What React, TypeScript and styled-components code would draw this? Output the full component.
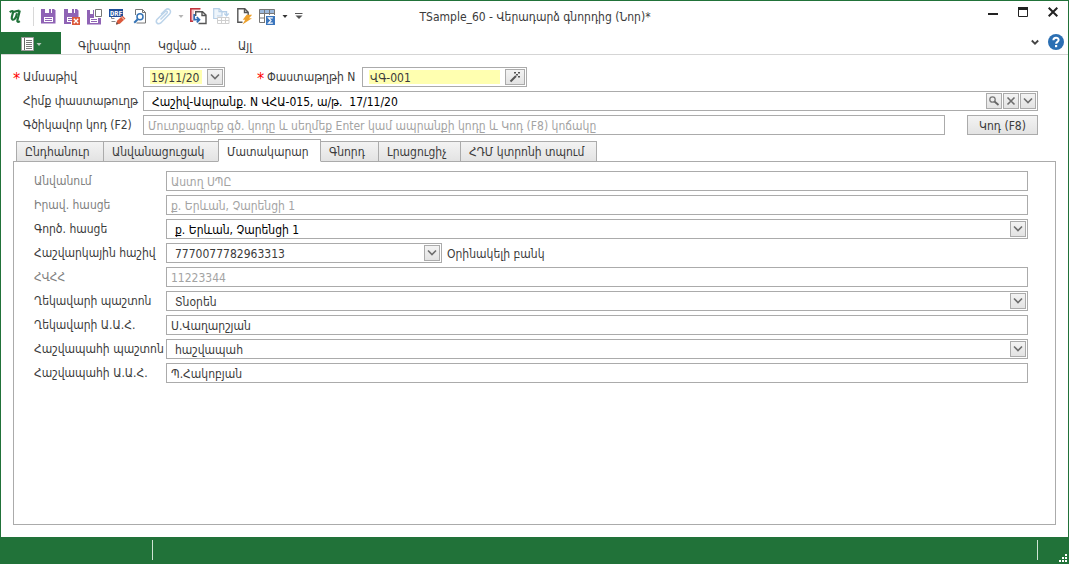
import React, { useState } from "react";
import styled, { createGlobalStyle, css } from "styled-components";

const green = "#217239";
const line = "#ababab";
const ink = "#3b3b3b";

const GlobalStyle = createGlobalStyle`
  *, *::before, *::after { box-sizing: border-box; }
  html, body, #root { height: 100%; }
  body { margin: 0; background: #fff; }
  body, button, input, select {
    font-family: "DejaVu Sans Condensed", "DejaVu Sans", "Noto Sans", sans-serif;
    font-size: 12px;
    line-height: 16px;
    color: ${ink};
  }
  button, input, select { margin: 0; padding: 0; border: 0; background: none; border-radius: 0; outline: none; }
  svg { display: block; flex: none; }
`;

const Window = styled.div`
  display: flex;
  flex-direction: column;
  min-height: 100%;
  border: 1px solid ${green};
  border-bottom: 0;
`;

const TitleBar = styled.header`
  display: grid;
  grid-template-columns: 1fr auto 1fr;
  align-items: center;
  height: 31px;
  padding: 0 7px 0 8px;
`;

const QuickAccess = styled.div`
  display: flex;
  align-items: center;
`;

const Separator = styled.span`
  width: 1px;
  height: 19px;
  margin: 0 3px 0 9px;
  background: #d8d8d8;
`;

const ToolButton = styled.button<{ $width?: number }>`
  display: flex;
  align-items: center;
  justify-content: center;
  width: ${(p) => p.$width ?? 23}px;
  height: 22px;
`;

const Title = styled.h1`
  margin: 0;
  font-size: 12px;
  font-weight: 400;
  white-space: pre;
`;

const WindowButtons = styled.div`
  display: flex;
  align-self: start;
  justify-content: flex-end;
  gap: 14px;
`;

const WindowButton = styled.button`
  display: flex;
  align-items: center;
  justify-content: center;
  width: 16px;
  height: 22px;
`;

const Ribbon = styled.nav`
  display: flex;
  align-items: stretch;
  height: 23px;
  border-bottom: 1px solid #d5d5d5;
`;

const AppMenu = styled.button`
  display: flex;
  align-items: center;
  gap: 1px;
  width: 60px;
  padding: 3px 0 0 20px;
  background: ${green};
`;

const RibbonTab = styled.button`
  padding: 5px 0 0;
  margin-left: 17px;
  width: 53px;
  white-space: nowrap;
  text-align: left;
  & + & { margin-left: 27px; }
`;

const RibbonEnd = styled.div`
  display: flex;
  align-items: center;
  gap: 3px;
  margin-left: auto;
  padding: 0 3px 2px 0;
`;

const IconButton = styled.button`
  display: flex;
  align-items: center;
  justify-content: center;
  width: 18px;
  height: 18px;
`;

const Form = styled.form`
  display: flex;
  flex: 1;
  flex-direction: column;
  padding: 12px;
`;

const Header = styled.div`
  display: flex;
  flex-direction: column;
  gap: 4px;
  padding-right: 18px;
  margin-bottom: 4px;
`;

const Row = styled.div`
  display: flex;
  align-items: center;
  height: 20px;
`;

const Label = styled.label<{ $required?: boolean; $muted?: boolean; $width?: number }>`
  flex: none;
  width: ${(p) => p.$width ?? 130}px;
  padding-left: 10px;
  white-space: nowrap;
  color: ${(p) => (p.$muted ? "#808080" : ink)};
  ${(p) =>
    p.$required &&
    css`
      padding-left: 0;
      &::before {
        content: "*";
        display: inline-block;
        width: 10px;
        font-size: 16px;
        line-height: 12px;
        vertical-align: -3px;
        color: #f00;
      }
    `}
`;

const SecondLabel = styled(Label)`
  margin-left: 32px;
`;

const Field = styled.div<{ $width?: number }>`
  display: flex;
  align-items: center;
  flex: ${(p) => (p.$width ? `0 0 ${p.$width}px` : "1 1 0")};
  min-width: 0;
  height: 20px;
  border: 1px solid ${line};
  background: #fff;
`;

const textColor = css<{ $tone?: "black" | "muted" }>`
  color: ${(p) => (p.$tone === "black" ? "#000" : p.$tone === "muted" ? "#a3a3a3" : ink)};
`;

const TextInput = styled.input<{ $tone?: "black" | "muted"; $inset?: boolean }>`
  flex: 1;
  min-width: 0;
  height: 18px;
  padding: 2px 4px 0;
  padding-left: ${(p) => (p.$inset ? 8 : 4)}px;
  ${textColor}
  &::placeholder { color: #a3a3a3; opacity: 1; }
`;

const RequiredInput = styled.input`
  flex: 1;
  min-width: 0;
  height: 14px;
  margin: 0 5px 0 6px;
  padding: 1px 1px 0;
  background: #ffffb0;
`;

const Combo = styled(Field)`
  position: relative;
`;

const Select = styled.select<{ $tone?: "black" | "muted" }>`
  flex: 1;
  min-width: 0;
  height: 18px;
  padding: 2px 20px 0 8px;
  appearance: none;
  ${textColor}
`;

const buttonFace = css`
  display: flex;
  align-items: center;
  justify-content: center;
  border: 1px solid ${line};
  background: linear-gradient(#f3f3f3, #e3e3e3);
`;

const FieldButton = styled.button<{ $wide?: boolean }>`
  ${buttonFace}
  flex: none;
  width: ${(p) => (p.$wide ? 20 : 16)}px;
  height: 16px;
  margin-right: 1px;
`;

const ComboArrow = styled.span`
  ${buttonFace}
  position: absolute;
  top: 1px;
  right: 1px;
  width: 16px;
  height: 16px;
  pointer-events: none;
`;

const CodeButton = styled.button`
  ${buttonFace}
  flex: none;
  width: 71px;
  height: 20px;
  margin-left: 22px;
  padding-top: 1px;
`;

const Tabs = styled.div`
  display: flex;
  align-items: flex-end;
  height: 23px;
  margin-bottom: -1px;
  padding-left: 3px;
`;

const Tab = styled.button<{ $active?: boolean; $width: number }>`
  width: ${(p) => p.$width}px;
  height: 21px;
  padding: 0 0 0 8px;
  border: 1px solid ${line};
  background: linear-gradient(#f3f3f3, #e3e3e3);
  text-align: left;
  white-space: nowrap;
  & + & { margin-left: -1px; }
  ${(p) =>
    p.$active &&
    css`
      z-index: 1;
      height: 23px;
      padding-top: 2px;
      border-bottom-color: #fff;
      background: #fff;
    `}
`;

const Panel = styled.section`
  display: flex;
  flex: 1;
  flex-direction: column;
  gap: 4px;
  padding: 9px 27px 9px 10px;
  border: 1px solid ${line};
`;

const Note = styled.span`
  margin-left: 5px;
  padding-top: 2px;
`;

const StatusBar = styled.footer`
  display: flex;
  align-items: stretch;
  height: 27px;
  padding: 3px 0 0;
  background: ${green};
`;

const StatusCell = styled.div<{ $width?: number }>`
  flex: ${(p) => (p.$width ? `0 0 ${p.$width}px` : 1)};
  height: 20px;
  border-right: 1px solid #cfe3d4;
`;

const Grip = styled.div`
  display: flex;
  flex: 0 0 30px;
  align-items: flex-end;
  justify-content: flex-end;
  padding: 0 1px 2px 0;
`;

const Chevron = () => (
  <svg width="10" height="8" viewBox="0 0 10 8">
    <path d="M1 1.5 5 5.500 9 1.500" fill="none" stroke="#6e6e6e" strokeWidth="1.600" />
  </svg>
);

const Triangle = ({ color }: { color: string }) => (
  <svg width="6" height="4" viewBox="0 0 6 4">
    <path d="M.5 0h5L3 3z" fill={color} />
  </svg>
);

const Logo = () => (
  <svg width="15" height="16" viewBox="0 0 15 16">
    <path
      d="M.8 3.200C2.400 1.600 4.400 1.500 4 3.600L2.800 8.200C2.300 10.800 4 11.300 5.600 10 7 8.800 7.600 6.500 8 4.200"
      fill="none" stroke={green} strokeWidth="2.200"
    />
    <path d="M4.800 3.300C6.600 1.400 8 2.600 10.600 1.600M10.800 1.600 8.400 11.200c-.4 1.800.6 2.300 2.400 1" fill="none" stroke={green} strokeWidth="2.200" />
  </svg>
);

const purple = "#8f63b5";

const SaveIcon = () => (
  <svg width="15" height="15" viewBox="0 0 15 15">
    <path d="M0 0h13l1.500 1.500V14.500H0z" fill={purple} />
    <path d="M4 0h4v4H4zM10 0h1v4h-1z" fill="#fff" />
    <path d="M3 8h9v5H3z" fill="#fff" />
    <path d="M4 9.500h7M4 11.500h7" stroke={purple} />
  </svg>
);

const SaveCloseIcon = () => (
  <svg width="16" height="16" viewBox="0 0 16 16">
    <path d="M0 0h13l1.500 1.500V8H7v7H0z" fill={purple} />
    <path d="M4 0h4v4H4zM10 0h1v4h-1zM3 8h5v5H3z" fill="#fff" />
    <path d="M4 9.500h4M4 11.500h4" stroke={purple} />
    <path d="M8 8h8v8H8z" fill="#dc5a3c" />
    <path d="m9.800 9.800 4.400 4.400m0-4.400-4.400 4.400" stroke="#fff" strokeWidth="1.300" />
  </svg>
);

const SaveNewIcon = () => (
  <svg width="16" height="16" viewBox="0 0 16 16">
    <path d="M0 1h7v8h7v6.500H0z" fill={purple} />
    <path d="M3 1h3v4H3zM3 9h8v5H3z" fill="#fff" />
    <path d="M4 10.500h6M4 12.500h6" stroke={purple} />
    <path d="M7.500 0h8v9h-8z" fill="#fff" />
    <path d="M8.500.5h6v7h-6z" fill="#fff" stroke="#777" />
  </svg>
);

const DrfText = styled.text`
  font-family: "DejaVu Sans Mono", monospace;
  font-size: 7px;
  font-weight: 700;
  fill: #fff;
`;

const DrfIcon = () => (
  <svg width="17" height="16" viewBox="0 0 17 16">
    <path d="M2.500 8v1.500h3M2.500 12.500h4" fill="none" stroke="#888" />
    <path d="M0 0h14v8H0z" fill="#1f4e99" />
    <DrfText x="1" y="7">DRF</DrfText>
    <path d="m7 15.500 1-3.800 5.500-5 3 2.800-5.600 5.200z" fill="#dc5a3c" />
    <path d="m7 15.500.6-2.400 1.800 1.800z" fill="#555" />
    <path d="m12.300 7.800 2.800 2.700" stroke="#fff" strokeWidth=".8" />
  </svg>
);

const PreviewIcon = () => (
  <svg width="15" height="15" viewBox="0 0 15 15">
    <path d="M2.500 6V.5h7l3 3V14h-9M9.500.5v3h3" fill="none" stroke="#777" />
    <circle cx="7" cy="7.800" r="3" fill="#fff" stroke="#3573b5" strokeWidth="1.500" />
    <path d="m4.700 10.200-3.500 3.600" stroke="#3573b5" strokeWidth="2" />
  </svg>
);

const ClipIcon = () => (
  <svg width="17" height="17" viewBox="0 0 17 17">
    <path
      d="m5.500 11.500 6.500-6.500c.9-1.500-.6-2.500-1.900-1.400L2 11.500c-2 2.800 1 5.600 3.800 3.400L14.500 6c2.600-3.200-.8-6.600-4-4.200L6 6.300"
      fill="none" stroke="#bcd4ea" strokeWidth="1.500"
    />
  </svg>
);

const CopyInIcon = () => (
  <svg width="17" height="17" viewBox="0 0 17 17">
    <path d="M0 .5h10v2H4v11H0z" fill="#f4c9cc" />
    <path d="M10.500.8H.8v12.500H3" fill="none" stroke="#c0333c" strokeWidth="1.500" />
    <path d="M5.700 8V3.700h6.800L16 7v8.500H8.500M12 3.700V7.500h4" fill="#fff" stroke="#555" strokeWidth="1.400" />
    <path d="M4.200 6v5.700h5M6.800 9l2.700 2.700-2.700 2.700" fill="none" stroke="#2f6eb5" strokeWidth="1.700" />
  </svg>
);

const CopyTableIcon = () => (
  <svg width="17" height="17" viewBox="0 0 17 17">
    <path d="M4 10.500H.7V.7h5.500L9 3.500V8H4M6 .7v3h3" fill="#eef5fb" stroke="#b7d0e8" strokeWidth="1.200" />
    <path d="M9 3.700h4.500v4M11.300 5.600l2.200 2.200 2.200-2.200" fill="none" stroke="#b5cfe8" strokeWidth="1.400" />
    <path d="M4.500 9.500h11.500v6H4.500zM4.500 12.500H16M8.500 9.500v6M12.500 9.500v6" fill="#fff" stroke="#cfcfcf" />
  </svg>
);

const FlashIcon = () => (
  <svg width="16" height="17" viewBox="0 0 16 17">
    <path d="M5.500 14.300H.8V.8h7l3.400 3.400v3M7.500.8v3.700h3.700" fill="none" stroke="#555" strokeWidth="1.400" />
    <path d="M9.600 6.700h5.600l-3.200 3.600h3L5.500 16.500l2.700-4.700H5.800z" fill="#eda12c" />
  </svg>
);

const TableSumIcon = () => (
  <svg width="17" height="16" viewBox="0 0 17 16">
    <path d="M.5.5h15v4H.5z" fill="#9cb9dc" />
    <path d="M.5.5h15v13H.5zM.5 4.500h15M.5 9h15M5.500.5v13M10.500.5v13" fill="none" stroke="#777" />
    <path d="M6 6h11v10H6z" fill="#fff" />
    <path d="M7 7h9v9H7z" fill="#3c76bd" />
    <path d="M13.800 8.800H9.500l2.500 2.700-2.500 2.700h4.300" fill="none" stroke="#fff" strokeWidth="1.200" />
  </svg>
);

const CustomizeIcon = () => (
  <svg width="8" height="7" viewBox="0 0 8 7">
    <path d="M0 .5h7.500" stroke="#555" />
    <path d="M.5 2.500h7L4 6z" fill="#555" />
  </svg>
);

const ListIcon = () => (
  <svg width="14" height="15" viewBox="0 0 14 15">
    <path d="M.5.5h12v13H.5z" fill="#fff" stroke="#9a9a9a" />
    <path d="M3.500 1v12" stroke="#666" />
    <path d="M5 3.500h6M5 5.500h6M5 7.500h6M5 9.500h6M5 11.500h6" stroke="#777" />
  </svg>
);

const WandIcon = () => (
  <svg width="12" height="12" viewBox="0 0 12 12">
    <path d="m1.500 10.500 5.500-5.500" stroke="#555" strokeWidth="2" />
    <path d="M5 1h2v1.500H5zM9 1h2v1.500H9zM7 3h2v1.500H7zM9 5h2v1.500H9z" fill="#555" />
  </svg>
);

const SearchIcon = () => (
  <svg width="12" height="12" viewBox="0 0 12 12">
    <circle cx="4.500" cy="4.500" r="2.700" fill="none" stroke="#777" strokeWidth="1.300" />
    <path d="m6.500 6.500 4 3.500" stroke="#666" strokeWidth="1.800" />
  </svg>
);

const ClearIcon = () => (
  <svg width="10" height="10" viewBox="0 0 10 10">
    <path d="m1.500 1.500 7 7m0-7-7 7" stroke="#6e6e6e" strokeWidth="1.600" />
  </svg>
);

const GripIcon = () => (
  <svg width="8" height="8" viewBox="0 0 8 8">
    <path d="M6 0h2v2H6zM3 3h2v2H3zM6 3h2v2H6zM0 6h2v2H0zM3 6h2v2H3zM6 6h2v2H6z" fill="#fff" />
  </svg>
);

type Detail = {
  id: string;
  label: string;
  value: string;
  kind: "text" | "combo";
  tone?: "black" | "muted";
  width?: number;
  note?: string;
};

const details: Detail[] = [
  { id: "name", label: "Անվանում", value: "Աստղ ՍՊԸ", kind: "text", tone: "muted" },
  { id: "legal", label: "Իրավ. հասցե", value: "ք. Երևան, Չարենցի 1", kind: "text", tone: "muted" },
  { id: "address", label: "Գործ. հասցե", value: "ք. Երևան, Չարենցի 1", kind: "combo", tone: "black" },
  { id: "account", label: "Հաշվարկային հաշիվ", value: "7770077782963313", kind: "combo", width: 276, note: "Օրինակելի բանկ" },
  { id: "tax", label: "ՀՎՀՀ", value: "11223344", kind: "text", tone: "muted" },
  { id: "headPost", label: "Ղեկավարի պաշտոն", value: "Տնօրեն", kind: "combo" },
  { id: "headName", label: "Ղեկավարի Ա.Ա.Հ.", value: "Ս.Վաղարշյան", kind: "text" },
  { id: "accPost", label: "Հաշվապահի պաշտոն", value: "հաշվապահ", kind: "combo" },
  { id: "accName", label: "Հաշվապահի Ա.Ա.Հ.", value: "Պ.Հակոբյան", kind: "text" },
];

const tabs = [
  { title: "Ընդհանուր", width: 88 },
  { title: "Անվանացուցակ", width: 116 },
  { title: "Մատակարար", width: 103 },
  { title: "Գնորդ", width: 59 },
  { title: "Լրացուցիչ", width: 83 },
  { title: "ՀԴՄ կտրոնի տպում", width: 137 },
];

const tools = [
  { name: "Save", icon: <SaveIcon /> },
  { name: "Save and close", icon: <SaveCloseIcon /> },
  { name: "Save and new", icon: <SaveNewIcon /> },
  { name: "Save draft", icon: <DrfIcon /> },
  { name: "Preview", icon: <PreviewIcon /> },
  { name: "Attach", icon: <ClipIcon /> },
  { name: "Attach options", icon: <Triangle color="#b5b5b5" />, width: 12 },
  { name: "Copy", icon: <CopyInIcon /> },
  { name: "Copy to table", icon: <CopyTableIcon /> },
  { name: "Quick action", icon: <FlashIcon /> },
  { name: "Totals", icon: <TableSumIcon /> },
  { name: "Totals options", icon: <Triangle color="#333" />, width: 12 },
  { name: "Customize toolbar", icon: <CustomizeIcon />, width: 16 },
];

export default function App() {
  const [active, setActive] = useState(2);

  return (
    <>
      <GlobalStyle />
      <Window>
        <TitleBar>
          <QuickAccess>
            <Logo />
            <Separator />
            {tools.map((t) => (
              <ToolButton key={t.name} type="button" aria-label={t.name} $width={t.width}>
                {t.icon}
              </ToolButton>
            ))}
          </QuickAccess>
          <Title>TSample_60 - Վերադարձ գնորդից (Նոր)*</Title>
          <WindowButtons>
            <WindowButton type="button" aria-label="Minimize">
              <svg width="12" height="12" viewBox="0 0 12 12">
                <path d="M1 8h10" stroke="#222" strokeWidth="2" />
              </svg>
            </WindowButton>
            <WindowButton type="button" aria-label="Maximize">
              <svg width="10" height="10" viewBox="0 0 10 10">
                <path d="M.5.5h9v9h-9z" fill="none" stroke="#222" />
                <path d="M0 0h10v3H0z" fill="#222" />
              </svg>
            </WindowButton>
            <WindowButton type="button" aria-label="Close">
              <svg width="10" height="10" viewBox="0 0 10 10">
                <path d="m.7.7 8.600 8.600m0-8.600L.7 9.300" stroke="#222" strokeWidth="2" />
              </svg>
            </WindowButton>
          </WindowButtons>
        </TitleBar>

        <Ribbon>
          <AppMenu type="button" aria-label="Menu">
            <ListIcon />
            <Triangle color="#b5c9ba" />
          </AppMenu>
          <RibbonTab type="button">Գլխավոր</RibbonTab>
          <RibbonTab type="button">Կցված ...</RibbonTab>
          <RibbonTab type="button">Այլ</RibbonTab>
          <RibbonEnd>
            <IconButton type="button" aria-label="Collapse ribbon">
              <svg width="8" height="7" viewBox="0 0 8 7">
                <path d="M.8 1.500 4 4.700l3.200-3.200" fill="none" stroke="#444" strokeWidth="1.800" />
              </svg>
            </IconButton>
            <IconButton type="button" aria-label="Help">
              <svg width="16" height="16" viewBox="0 0 16 16">
                <circle cx="8" cy="8" r="8" fill="#2b6fb3" />
                <path d="M5.400 6.200C5.400 2.700 10.700 2.900 10.600 6c0 1.800-2.500 1.900-2.500 3.800" fill="none" stroke="#fff" strokeWidth="2" />
                <path d="M7 11h2.200v2.200H7z" fill="#fff" />
              </svg>
            </IconButton>
          </RibbonEnd>
        </Ribbon>

        <Form onSubmit={(e) => e.preventDefault()}>
          <Header>
            <Row>
              <Label htmlFor="date" $required>Ամսաթիվ</Label>
              <Field $width={82}>
                <RequiredInput id="date" defaultValue="19/11/20" />
                <FieldButton type="button" aria-label="Open calendar">
                  <Chevron />
                </FieldButton>
              </Field>
              <SecondLabel htmlFor="number" $required $width={105}>Փաստաթղթի N</SecondLabel>
              <Field $width={165}>
                <RequiredInput id="number" defaultValue="ՎԳ-001" />
                <FieldButton type="button" aria-label="Generate number" $wide>
                  <WandIcon />
                </FieldButton>
              </Field>
            </Row>
            <Row>
              <Label htmlFor="basis">Հիմք փաստաթուղթ</Label>
              <Field>
                <TextInput id="basis" $tone="black" $inset defaultValue="Հաշիվ-Ապրանք. N ՎՀԱ-015, ա/թ.  17/11/20" />
                <FieldButton type="button" aria-label="Find">
                  <SearchIcon />
                </FieldButton>
                <FieldButton type="button" aria-label="Clear">
                  <ClearIcon />
                </FieldButton>
                <FieldButton type="button" aria-label="Open list">
                  <Chevron />
                </FieldButton>
              </Field>
            </Row>
            <Row>
              <Label htmlFor="barcode">Գծիկավոր կոդ (F2)</Label>
              <Field>
                <TextInput
                  id="barcode"
                  placeholder="Մուտքագրեք գծ. կոդը և սեղմեք Enter կամ ապրանքի կոդը և Կոդ (F8) կոճակը"
                />
              </Field>
              <CodeButton type="button">Կոդ (F8)</CodeButton>
            </Row>
          </Header>

          <Tabs role="tablist">
            {tabs.map((t, i) => (
              <Tab
                key={t.title}
                type="button"
                role="tab"
                aria-selected={i === active}
                $active={i === active}
                $width={t.width}
                onClick={() => setActive(i)}
              >
                {t.title}
              </Tab>
            ))}
          </Tabs>

          <Panel>
            {details.map((d) => (
              <Row key={d.id}>
                <Label htmlFor={d.id} $width={142} $muted={d.tone === "muted"}>{d.label}</Label>
                {d.kind === "combo" ? (
                  <Combo $width={d.width}>
                    <Select id={d.id} $tone={d.tone} defaultValue={d.value}>
                      <option>{d.value}</option>
                    </Select>
                    <ComboArrow>
                      <Chevron />
                    </ComboArrow>
                  </Combo>
                ) : (
                  <Field>
                    <TextInput id={d.id} $tone={d.tone} readOnly={d.tone === "muted"} defaultValue={d.value} />
                  </Field>
                )}
                {d.note && <Note>{d.note}</Note>}
              </Row>
            ))}
          </Panel>
        </Form>

        <StatusBar>
          <StatusCell $width={152} />
          <StatusCell />
          <Grip>
            <GripIcon />
          </Grip>
        </StatusBar>
      </Window>
    </>
  );
}
